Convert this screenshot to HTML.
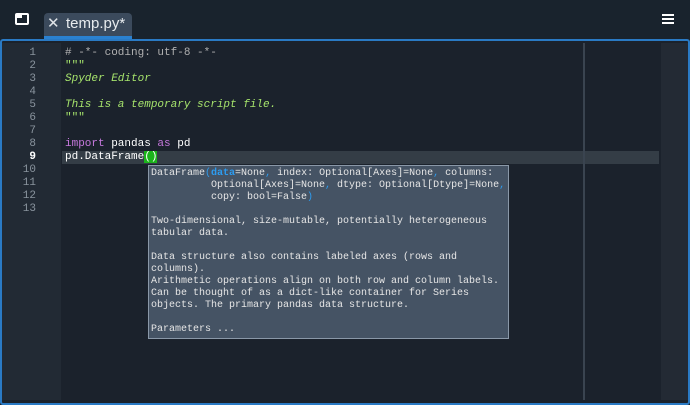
<!DOCTYPE html>
<html><head><meta charset="utf-8"><style>
*{margin:0;padding:0;box-sizing:border-box}
body{width:690px;height:405px;background:#19232d;overflow:hidden;position:relative;font-family:"Liberation Mono",monospace}
.abs{position:absolute}
.code{font-size:11px;line-height:13px;white-space:pre;color:#fff}
.tip{font-size:10px;line-height:12px;white-space:pre;color:#e6e6e6}
</style></head><body>
<div class="abs" style="left:15px;top:13px;width:14px;height:12px;border:2px solid #fff;border-radius:2px;background:#19232d"></div>
<div class="abs" style="left:17px;top:15px;width:5px;height:3px;background:#fff"></div>
<div class="abs" style="left:44px;top:13px;width:88px;height:26px;background:#3b4a5c;border-radius:4px 4px 0 0;border-bottom:3px solid #2a81d0"></div>
<div class="abs" style="left:47px;top:14px;color:#e0e4e8;font-family:'Liberation Sans',sans-serif;font-size:15px">✕</div>
<div class="abs" style="left:66px;top:15px;color:#e8ecef;font-family:'Liberation Sans',sans-serif;font-size:15px">temp.py*</div>
<div class="abs" style="left:662px;top:14px;width:12px;height:2px;background:#fff;box-shadow:0 4px 0 #fff,0 8px 0 #fff"></div>
<div class="abs" style="left:0;top:39px;width:690px;height:366px;border:2px solid #2a7ac4;border-radius:3px;background:#1b222c"></div>
<div class="abs" style="left:2px;top:43px;width:59px;height:357px;background:#222a34"></div>
<div class="abs" style="left:661px;top:43px;width:27px;height:357px;background:#232a34"></div>
<div class="abs" style="left:62px;top:151px;width:597px;height:13px;background:#343d46"></div>
<div class="abs" style="left:583px;top:43px;width:2px;height:357px;background:#3a4450"></div>
<div class="abs code" style="left:20px;top:47px;width:16px;text-align:right;color:#8a949e">1
2
3
4
5
6
7
8
<b style="color:#fff">9</b>
10
11
12
13</div>
<div class="abs code" style="left:65px;top:47px"><span style="color:#b0b0b0"># -*- coding: utf-8 -*-</span>
<span style="color:#a6e36c">"""</span>
<i style="color:#a6e36c">Spyder Editor</i>

<i style="color:#a6e36c">This is a temporary script file.</i>
<span style="color:#a6e36c">"""</span>

<span style="color:#c678dd">import</span> pandas <span style="color:#c678dd">as</span> pd
pd.DataFrame<span style="background:#1bb31b">()</span></div>
<div class="abs" style="left:148px;top:165px;width:361px;height:174px;background:#455364;border:1px solid #8a98a8"></div>
<div class="abs tip" style="left:151px;top:168px">DataFrame<span style="color:#2d9cf0">(</span><b style="color:#2d9cf0">data</b>=None<span style="color:#2d9cf0">,</span> index: Optional[Axes]=None<span style="color:#2d9cf0">,</span> columns:
          Optional[Axes]=None<span style="color:#2d9cf0">,</span> dtype: Optional[Dtype]=None<span style="color:#2d9cf0">,</span>
          copy: bool=False<span style="color:#2d9cf0">)</span>

Two-dimensional, size-mutable, potentially heterogeneous
tabular data.

Data structure also contains labeled axes (rows and
columns).
Arithmetic operations align on both row and column labels.
Can be thought of as a dict-like container for Series
objects. The primary pandas data structure.

Parameters ...</div>
</body></html>
